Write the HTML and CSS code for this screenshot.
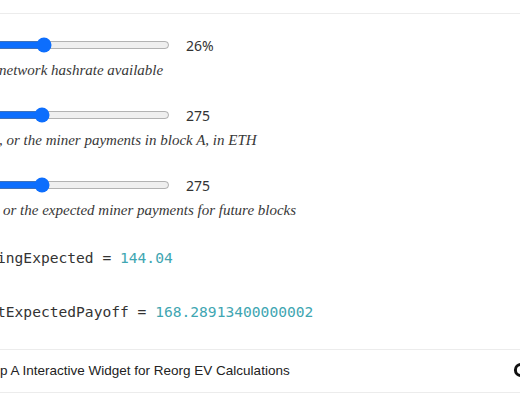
FILE: index.html
```html
<!DOCTYPE html>
<html>
<head>
<meta charset="utf-8">
<link rel="stylesheet" href="styles.css">
</head>
<body>
<div class="topbar"></div>
<main class="cells">
  <section class="control">
    <div class="slider-row">
      <input class="range" type="range" min="0" max="100" value="27">
      <span class="value">26%</span>
    </div>
    <p class="desc desc-1">network hashrate available</p>
  </section>
  <section class="control">
    <div class="slider-row">
      <input class="range" type="range" min="0" max="1000" value="260">
      <span class="value">275</span>
    </div>
    <p class="desc desc-2">, or the miner payments in block A, in ETH</p>
  </section>
  <section class="control">
    <div class="slider-row">
      <input class="range" type="range" min="0" max="1000" value="260">
      <span class="value">275</span>
    </div>
    <p class="desc desc-3">or the expected miner payments for future blocks</p>
  </section>
  <pre class="code code-1">ingExpected = <span class="num">144.04</span></pre>
  <pre class="code code-2">tExpectedPayoff = <span class="num">168.28913400000002</span></pre>
</main>
<footer class="footer">
  <span class="title">p A Interactive Widget for Reorg EV Calculations</span>
  <svg class="logo" width="18" height="18" viewBox="0 0 18 18" aria-hidden="true">
    <circle cx="9" cy="9" r="5.6" fill="none" stroke="#111" stroke-width="3"/>
  </svg>
</footer>
</body>
</html>
```
FILE: styles.css
```css
html, body {
  margin: 0;
  padding: 0;
  background: #fff;
  overflow: hidden;
  width: 520px;
  height: 400px;
}

.topbar {
  height: 13px;
  border-bottom: 1px solid #ececec;
}

.cells {
  padding-top: 17px;
  background: #fff;
}

.control {
  margin-bottom: 20px;
}

.slider-row {
  display: flex;
  align-items: center;
  height: 28px;
  margin-left: -8px;
}

.range {
  width: 178px;
  margin: 0;
  accent-color: #0d6efd;
}

.value {
  margin-left: 16px;
  font-family: "Noto Sans", "Liberation Sans", sans-serif;
  font-size: 14px;
  color: #333;
}

.desc {
  margin: 0;
  height: 22px;
  line-height: 23px;
  font-family: "Liberation Serif", "DejaVu Serif", serif;
  font-style: italic;
  font-size: 15px;
  color: #383838;
  white-space: nowrap;
}

.desc-1 { margin-left: -1px; }
.desc-2 { margin-left: -1px; }
.desc-3 { margin-left: 3px; }

.code {
  margin: 0;
  height: 20px;
  line-height: 20px;
  font-family: "DejaVu Sans Mono", "Liberation Mono", monospace;
  font-size: 14.6px;
  color: #333;
  white-space: pre;
}

.code-1 {
  margin-top: 27px;
  margin-left: -3px;
}

.code-2 {
  margin-top: 34px;
  margin-left: -3px;
}

.num {
  color: #3fa6b2;
}

.footer {
  margin-top: 27px;
  height: 42px;
  border-top: 1px solid #ececec;
  border-bottom: 1px solid #ececec;
  display: flex;
  align-items: center;
  justify-content: space-between;
}

.title {
  font-family: "Liberation Sans", Arial, sans-serif;
  font-size: 13.5px;
  color: #222;
  margin-left: 0;
  margin-top: -2px;
  white-space: nowrap;
}

.logo {
  margin-right: -10px;
  margin-top: -2px;
}
```
